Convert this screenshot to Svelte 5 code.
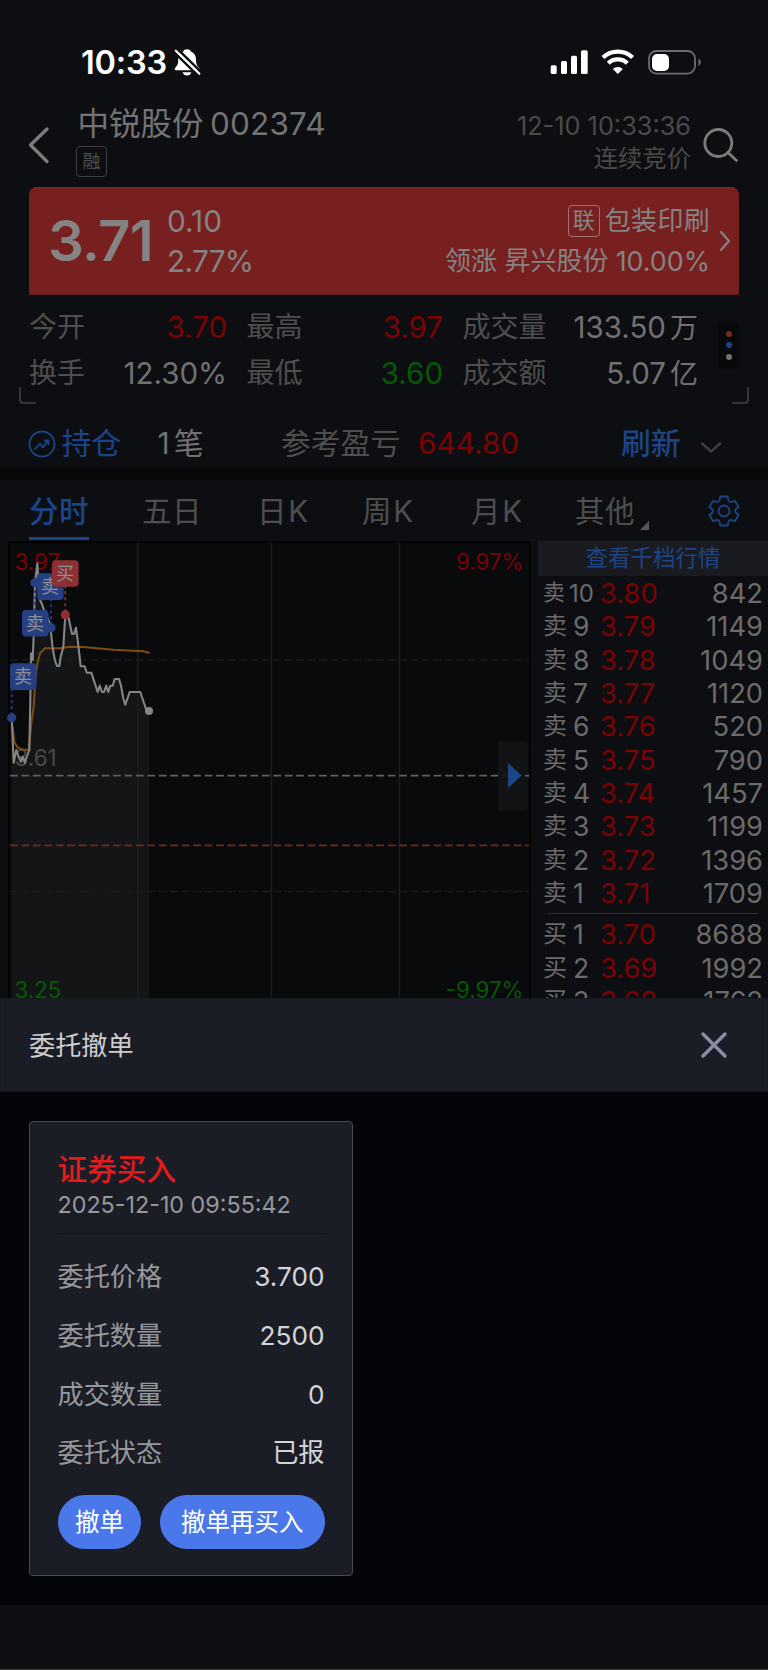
<script>
  const stats = [
    { label: '今开', value: '3.70', tone: 'up' },
    { label: '最高', value: '3.97', tone: 'up' },
    { label: '成交量', value: '133.50', unit: '万' },
    { label: '换手', value: '12.30%' },
    { label: '最低', value: '3.60', tone: 'down' },
    { label: '成交额', value: '5.07', unit: '亿' },
  ];

  const tabs = ['分时', '五日', '日K', '周K', '月K', '其他'];
  let activeTab = '分时';

  const asks = [
    ['10', '3.80', 842],
    ['9', '3.79', 1149],
    ['8', '3.78', 1049],
    ['7', '3.77', 1120],
    ['6', '3.76', 520],
    ['5', '3.75', 790],
    ['4', '3.74', 1457],
    ['3', '3.73', 1199],
    ['2', '3.72', 1396],
    ['1', '3.71', 1709],
  ];

  const bids = [
    ['1', '3.70', 8688],
    ['2', '3.69', 1992],
    ['3', '3.68', 1762],
  ];

  const priceLine =
    '11.7,176.7 13.7,221.7 16.3,209 18.7,216 21,220.7 22.7,215.7 24.7,221.7 29.3,209 30.3,160 31,112.3 32.7,119 33.7,94 35,42.3 37.3,22.3 40,59 41.7,62.3 44.3,70 50,82.3 52.7,107.3 55,119.7 57,125 59.3,125 60.7,115.7 63.3,105.7 65.3,74 68.7,77.3 72,93 74,93 76,86.7 78.3,104 80.7,125.3 84.7,125.3 86.7,131.7 91.3,131.7 97.7,151 99.7,144.7 102,151 104,151 106.3,144.7 108.3,151 110.3,144.7 112.7,144.7 114.7,138 119,138 121,144.7 123.3,157.3 125.3,163.7 129.7,151 140.3,151 146.7,170 149,170';
  const averageLine =
    '12.7,186 14.3,200.7 17.3,206.3 21.7,208.3 28.7,209.3 31.7,179 33.7,165.7 35.3,139 37.7,120.7 40,112.3 45,107.3 60,107.3 70,105.7 83.3,106 113.3,108.7 143.3,110.3 149,111.7';

  // x, y: top left of the badge; dotX, dotY: the deal itself
  const deals = [
    { side: 'sell', text: '卖', x: 10, y: 122.3, dotX: 11.7, dotY: 176.7 },
    { side: 'sell', text: '卖', x: 22, y: 69, dotX: 35, dotY: 41.7 },
    { side: 'sell', text: '卖', x: 37, y: 32.3, dotX: 51, dotY: 86.7 },
    { side: 'buy', text: '买', x: 52, y: 19.2, dotX: 65.3, dotY: 73.7 },
  ];

  const order = [
    ['委托价格', '3.700'],
    ['委托数量', '2500'],
    ['成交数量', '0'],
    ['委托状态', '已报'],
  ];
</script>

<div class="screen">
  <div class="market">
    <div class="statusbar">
      <span class="clock">10:33</span>
      <svg class="bell" width="27" height="29" viewBox="0 0 27 29">
        <path d="M13 1.2c1.9 0 3.3.9 3.8 2.3 3.4 1.2 5.2 4 5.2 7.8 0 5 .9 6.3 3 8.4.9.9.6 2.6-.9 2.6H2.2c-1.5 0-2-1.6-.9-2.6 2.2-2.2 2.9-3.6 2.9-8.4 0-3.8 1.8-6.6 5.1-7.8.5-1.4 1.9-2.3 3.7-2.3z" />
        <path d="M8.6 24.3h8.7c-.4 2-2.2 3.3-4.3 3.3s-3.9-1.3-4.4-3.3z" />
        <path class="gap" d="M-.5 3.5l26 25.5M3 .5l26 25.5" />
        <path class="slash" d="M1.8 2.7L25.4 25.8" />
      </svg>
      <svg class="signals" width="152" height="28" viewBox="0 0 152 28">
        <rect x="0.7" y="16.3" width="6" height="8.7" rx="1.6" />
        <rect x="11" y="12" width="6" height="13" rx="1.6" />
        <rect x="21" y="6.7" width="6" height="18.3" rx="1.6" />
        <rect x="31" y="1.3" width="6.7" height="23.7" rx="1.6" />
        <g class="wave">
          <path d="M53 8.5a21.5 21.5 0 0 1 29.6 0" />
          <path d="M58.3 14.2a13.6 13.6 0 0 1 19 0" />
        </g>
        <path d="M67.8 25l-5-5a7.3 7.3 0 0 1 10 0z" />
        <rect class="shell" x="99" y="2" width="46" height="22.6" rx="7.5" />
        <rect x="102" y="5" width="17" height="17" rx="5" />
        <path class="tip" d="M148.500 9.700c3 1.200 3 6 0 7.200z" />
      </svg>
    </div>

    <header>
      <svg class="back" width="22" height="38" viewBox="0 0 22 38">
        <path d="M19 3L2.5 19 19 35.5" />
      </svg>
      <div class="name">
        <h1>中锐股份 <span>002374</span></h1>
        <span class="margin-tag">融</span>
      </div>
      <div class="time">
        <span class="date">12-10 10:33:36</span>
        <span>连续竞价</span>
      </div>
      <svg class="search" width="36" height="36" viewBox="0 0 36 36">
        <circle cx="15.3" cy="15" r="13.5" />
        <path d="M25 24.5l8.5 8" />
      </svg>
    </header>

    <section class="quote">
      <strong>3.71</strong>
      <div class="change">
        <span>0.10</span>
        <span class="percent">2.77%</span>
      </div>
      <div class="sector">
        <div class="industry"><span class="link-tag">联</span>包装印刷</div>
        <div>领涨 昇兴股份 <span class="rate">10.00%</span></div>
      </div>
      <svg class="more" width="12" height="22" viewBox="0 0 12 22">
        <path d="M2 2l8 9-8 9" />
      </svg>
    </section>

    <section class="stats">
      <div class="stats-grid">
        {#each stats as stat}
          <span class="label">{stat.label}</span>
          <span class="value {stat.tone ?? ''}">{stat.value}{#if stat.unit}<i>{stat.unit}</i>{/if}</span>
        {/each}
      </div>
      <div class="dots"><b></b><b></b><b></b></div>
    </section>
    <div class="corners"><i></i><i></i></div>

    <section class="position">
      <svg width="28" height="28" viewBox="0 0 28 28">
        <circle cx="14" cy="14" r="12.5" />
        <path d="M7 19l5-5.5 3 4 5-7M17 10.5h3.5V14" />
      </svg>
      <span class="blue hold">持仓</span>
      <span class="count">1<i>笔</i></span>
      <span class="label">参考盈亏</span>
      <span class="up profit">644.80</span>
      <span class="blue refresh">刷新</span>
      <svg class="fold" width="22" height="12" viewBox="0 0 22 12">
        <path d="M2 1.5l9 8 9-8" />
      </svg>
    </section>

    <nav>
      {#each tabs as tab}
        <button
          class:active={tab === activeTab}
          class:kline={tab.endsWith('K')}
          on:click={() => (activeTab = tab)}
        >
          {tab}
          {#if tab === '其他'}<em></em>{/if}
        </button>
      {/each}
      <svg class="gear" width="32" height="32" viewBox="0 0 32 32">
        <path d="M12.3 1.5h7.4l.7 3.5c.4 1.6 1.9 2.4 3.4 1.9l3.2-1.1 3.5 6.2-2.5 2.2c-1.3 1-1.3 2.6 0 3.6l2.5 2.2-3.5 6.2-3.2-1.1c-1.5-.5-3 .3-3.4 1.9l-.7 3.5h-7.4l-.7-3.5c-.4-1.6-1.9-2.4-3.4-1.9L5 26.2 1.5 20 4 17.8c1.3-1 1.3-2.6 0-3.6L1.5 12 5 5.8l3.2 1.1c1.5.5 3-.3 3.4-1.9z" />
        <circle cx="16" cy="16" r="5.5" />
      </svg>
    </nav>

    <div class="board">
      <svg class="chart" width="538" height="457" viewBox="0 0 538 457">
        <rect class="frame" x="9" y="1" width="521" height="480" />
        <polygon class="area" points="11.7,470 {priceLine} 149,470" />
        <path class="column" d="M137.8 2v460M271.3 2v460M399.3 2v460" />
        <path class="dash faint" d="M10 119h519M10 350.5h519" />
        <path class="dash zero" d="M10 234.7h519" />
        <path class="dash cost" d="M10 304.3h519" />
        <rect class="handle" x="498" y="200.5" width="30" height="69" rx="3" />
        <path class="arrow" d="M508 222l13.5 12.5L508 247z" />
        <path class="dash zero" d="M525 234.7h4" />
        <g class="scale">
          <text class="red" x="14.5" y="29">3.97</text>
          <text class="red end" x="523.5" y="29">9.97%</text>
          <text x="14.5" y="225">3.61</text>
          <text class="green" x="14.5" y="456.7">3.25</text>
          <text class="green end" x="523.5" y="456.7">-9.97%</text>
        </g>
        <polyline class="average" points={averageLine} />
        <polyline class="price" points={priceLine} />
        <circle class="last" cx="149" cy="170" r="4" />
        {#each deals as deal}
          <g class={deal.side}>
            <path d="M{deal.dotX} {deal.y + 13}V{deal.dotY}" />
            <circle cx={deal.dotX} cy={deal.dotY} r="4.6" />
            <rect x={deal.x} y={deal.y} width="26.6" height="26.6" rx="4" />
            <text x={deal.x + 13} y={deal.y + 20}>{deal.text}</text>
          </g>
        {/each}
      </svg>

      <aside>
        <a href="#depth">查看千档行情</a>
        {#each asks as [level, price, volume]}
          <div class="level" class:wide={level === '10'}>
            <span class="side">卖</span><b>{level}</b><span class="up">{price}</span><span class="volume">{volume}</span>
          </div>
        {/each}
        <hr />
        {#each bids as [level, price, volume]}
          <div class="level">
            <span class="side">买</span><b>{level}</b><span class="up">{price}</span><span class="volume">{volume}</span>
          </div>
        {/each}
      </aside>
    </div>
  </div>

  <div class="sheet">
    <div class="sheet-head">
      <h2>委托撤单</h2>
      <svg width="28" height="28" viewBox="0 0 28 28">
        <path d="M3 3l22 22M25 3L3 25" />
      </svg>
    </div>
    <div class="sheet-body">
      <div class="card">
        <h3>证券买入</h3>
        <time>2025-12-10 09:55:42</time>
        <dl>
          {#each order as [label, value]}
            <div>
              <dt>{label}</dt>
              <dd>{value}</dd>
            </div>
          {/each}
        </dl>
        <div class="actions">
          <button>撤单</button>
          <button class="rebuy">撤单再买入</button>
        </div>
      </div>
    </div>
    <footer></footer>
  </div>
</div>

<style>
  :global(body) {
    background: #0d0e12;
  }

  .screen {
    width: 768px;
    height: 1670px;
    overflow: hidden;
    background: #0d0e12;
    color: #6b6b6b;
    font-family: Inter, 'Noto Sans CJK SC', sans-serif;
    font-size: 28px;
    line-height: 1;
  }

  .screen * {
    box-sizing: border-box;
  }

  svg {
    display: block;
    flex: none;
    fill: none;
    stroke-linecap: round;
    stroke-linejoin: round;
  }

  i,
  em {
    font-style: normal;
  }

  button {
    border: 0;
    padding: 0;
    background: none;
    color: inherit;
    font: inherit;
    white-space: nowrap;
  }

  .up {
    color: #7c0204;
  }

  .down {
    color: #045a04;
  }

  .blue {
    color: #1b4586;
  }

  .market {
    height: 998px;
    overflow: hidden;
  }

  .statusbar {
    display: flex;
    align-items: center;
    height: 105px;
    padding: 20px 66px 0 81px;
  }

  .clock {
    width: 93px;
    padding-top: 2px;
    color: #fff;
    font-size: 32.5px;
    font-weight: 600;
    letter-spacing: -0.2px;
    white-space: nowrap;
  }

  .bell {
    fill: #fff;
  }

  .bell .gap {
    stroke: #0d0e12;
    stroke-width: 2.5;
  }

  .bell .slash {
    stroke: #fff;
    stroke-width: 2.2;
  }

  .signals {
    margin-left: auto;
    fill: #fff;
  }

  .wave {
    fill: none;
    stroke: #fff;
    stroke-width: 4.2;
    stroke-linecap: butt;
  }

  .shell {
    fill: none;
    stroke: #6d6e70;
    stroke-width: 1.8;
  }

  .tip {
    fill: #6d6e70;
  }

  header {
    display: flex;
    height: 82px;
    padding: 0 29px 0 28px;
  }

  .back {
    margin-top: 21px;
    stroke: #7b7b7b;
    stroke-width: 3.4;
  }

  .name {
    padding-left: 26px;
  }

  h1 {
    margin: 0;
    padding-left: 1.5px;
    height: 41px;
    color: #737373;
    font-size: 31.5px;
    font-weight: 400;
    line-height: 38px;
    white-space: nowrap;
    word-spacing: -2.5px;
  }

  h1 span {
    letter-spacing: 0.2px;
  }

  .margin-tag {
    display: block;
    width: 31px;
    height: 31px;
    border: 1px solid #3e3e40;
    border-radius: 4px;
    color: #505050;
    font-size: 18px;
    line-height: 29px;
    text-align: center;
  }

  .time {
    display: flex;
    flex-direction: column;
    gap: 4px;
    margin: 7px 12px 0 auto;
    color: #4a4a4b;
    font-size: 24.3px;
    line-height: 28px;
    text-align: right;
  }

  .date {
    font-size: 25.3px;
  }

  .search {
    margin-top: 23px;
    stroke: #7b7b7b;
    stroke-width: 2.8;
  }

  .quote {
    display: flex;
    align-items: center;
    height: 108px;
    margin: 0 29px;
    padding: 0 8px 0 19px;
    border-top: 1px solid #862626;
    border-bottom: 1px solid #5c1b1c;
    border-radius: 8px 8px 0 0;
    background: #782020;
    color: #858383;
    white-space: nowrap;
  }

  .quote strong {
    width: 119px;
    font-size: 56.5px;
    font-weight: 600;
    letter-spacing: -0.8px;
  }

  .change {
    font-size: 29.8px;
    line-height: 40.5px;
  }

  .change span {
    display: block;
  }

  .percent {
    letter-spacing: -0.7px;
  }

  .sector {
    margin-left: auto;
    font-size: 26px;
    line-height: 40.5px;
  }

  .sector div {
    display: flex;
    justify-content: flex-end;
    align-items: center;
    white-space: pre;
  }

  .industry {
    letter-spacing: 0.3px;
  }

  .rate {
    font-size: 26.8px;
  }

  .link-tag {
    width: 32px;
    height: 32px;
    margin-right: 5px;
    border: 1px solid #a07070;
    border-radius: 4px;
    font-size: 22px;
    line-height: 28px;
    text-align: center;
  }

  .more {
    margin-left: 9px;
    stroke: #858383;
    stroke-width: 2.2;
  }

  .stats {
    display: flex;
    align-items: flex-start;
    justify-content: space-between;
    height: 92px;
    padding: 9px 29px 0 29px;
  }

  .stats-grid {
    display: grid;
    grid-template-columns: 62px 136px 82px 134px 113px 142px;
    grid-auto-rows: 46px;
    line-height: 46px;
    white-space: nowrap;
  }

  /* every label but the first of a row stands off the value before it */
  .stats-grid .value + .label {
    padding-left: 19.5px;
  }

  .stats-grid .value:nth-child(6) + .label {
    padding-left: 0;
  }

  .label {
    color: #4e4e4f;
  }

  .value {
    font-size: 29.5px;
    text-align: right;
  }

  .value i {
    padding-left: 4px;
    font-size: 28px;
  }

  .value:not(.up, .down) {
    color: #717171;
  }

  .dots {
    display: flex;
    flex-direction: column;
    align-items: center;
    justify-content: center;
    gap: 5.5px;
    width: 21px;
    height: 48px;
    margin-top: 17px;
    border-radius: 4px;
    background: #08090b;
  }

  .dots b {
    width: 6px;
    height: 6px;
    border-radius: 50%;
    background: #717171;
  }

  .dots b:nth-child(1) {
    background: #7b2a20;
  }

  .dots b:nth-child(2) {
    background: #1b4586;
  }

  .corners {
    display: flex;
    justify-content: space-between;
    padding: 0 19px;
  }

  .corners i {
    width: 17px;
    height: 17px;
    border-bottom: 2px solid #363638;
    border-left: 2px solid #363638;
    border-radius: 0 0 0 4px;
  }

  .corners i:last-child {
    transform: scaleX(-1);
  }

  .position {
    display: grid;
    grid-template-columns: 33.5px 96px 123.5px 137px 203px 79px 22px;
    align-items: center;
    height: 76px;
    padding: 4px 28px 0;
    background: linear-gradient(#0d0e12 82%, #08090b 86%);
    font-size: 29.8px;
    white-space: nowrap;
  }

  .position svg {
    stroke: #1b4586;
    stroke-width: 1.8;
  }

  .position .fold {
    margin-top: 7px;
    stroke: #3e3e40;
    stroke-width: 2.5;
  }

  .count {
    color: #717171;
  }

  .count i {
    padding-left: 4px;
  }

  .refresh {
    font-weight: 500;
  }

  nav {
    display: grid;
    grid-template-columns: 113px 115px 105px 109px 104px 133px 32px;
    height: 61px;
    padding-left: 29px;
    color: #4e4e4f;
    font-size: 29.5px;
    box-shadow: inset 0 1px #0f1014;
  }

  nav button {
    display: flex;
    align-items: flex-end;
    height: 60px;
    padding-bottom: 14px;
    justify-self: start;
    line-height: 30px;
    letter-spacing: 0.5px;
  }

  nav .kline {
    letter-spacing: 1.8px;
  }

  nav .active {
    border-bottom: 3px solid #1b4586;
    padding-bottom: 11px;
    color: #1b4586;
    font-weight: 500;
  }

  nav em {
    width: 9px;
    height: 9px;
    margin: 0 0 -4px 5px;
    background: #59595a;
    clip-path: polygon(100% 0, 100% 100%, 0 100%);
  }

  .gear {
    margin-top: 15px;
    stroke: #1b4586;
    stroke-width: 1.8;
  }

  .board {
    display: flex;
  }

  .frame {
    fill: #090a0c;
    stroke: #030304;
    stroke-width: 2;
  }

  .area {
    fill: #141516;
  }

  .column {
    stroke: #1b1c23;
    stroke-width: 1.7;
  }

  .dash {
    stroke-width: 1.7;
    stroke-dasharray: 7.7 3.75;
    stroke-linecap: butt;
  }

  .faint {
    stroke: #1a1b20;
  }

  .zero {
    stroke: #606061;
  }

  .cost {
    stroke: #74281f;
  }

  .handle {
    fill: #141517;
    fill-opacity: 0.85;
  }

  .arrow {
    fill: #1b4586;
  }

  .scale {
    fill: #4a4a4b;
    font-size: 22.3px;
  }

  .scale .red {
    fill: #7c0204;
  }

  .scale .green {
    fill: #045a04;
  }

  .scale .end {
    text-anchor: end;
  }

  .average {
    stroke: #7f4c10;
    stroke-width: 2;
  }

  .price {
    stroke: #858585;
    stroke-width: 2.1;
  }

  .last {
    fill: #858585;
  }

  .sell {
    fill: #253f82;
    stroke: #253f82;
  }

  .buy {
    fill: #8e3032;
    stroke: #8e3032;
  }

  .sell path,
  .buy path {
    stroke-width: 1.8;
    stroke-dasharray: 3 3;
    stroke-linecap: butt;
  }

  .sell circle,
  .sell rect,
  .buy circle,
  .buy rect {
    stroke: none;
  }

  .sell text,
  .buy text {
    stroke: none;
    fill: #8e8e92;
    font-size: 18px;
    text-anchor: middle;
  }

  aside {
    flex: 1;
    font-size: 27.3px;
    white-space: nowrap;
  }

  aside a {
    display: block;
    height: 35px;
    margin-bottom: 1px;
    background: #1a1b20;
    color: #1b4586;
    font-size: 22.5px;
    line-height: 34px;
    text-align: center;
    text-decoration: none;
  }

  .level {
    display: grid;
    grid-template-columns: 30px 27px 60px 1fr;
    height: 33.33px;
    padding: 0 5px 0 5px;
    line-height: 33.33px;
  }

  .level .side {
    font-size: 24px;
    line-height: 31px;
  }

  .level b {
    font-size: 26.5px;
    font-weight: 400;
  }

  .level.wide .side {
    font-size: 22px;
  }

  .level.wide b {
    margin-left: -4px;
    font-size: 24px;
  }

  .volume {
    text-align: right;
  }

  hr {
    width: 210px;
    height: 1px;
    margin: 3px auto 4px;
    border: 0;
    background: #303134;
  }

  .sheet-head {
    display: flex;
    align-items: center;
    justify-content: space-between;
    height: 94px;
    padding: 0 39px 0 28px;
    border: 1px solid #171920;
    background: #1b1d26;
  }

  .sheet-head svg {
    stroke: #8c8da3;
    stroke-width: 3.4;
  }

  h2 {
    margin: 0;
    padding-top: 3px;
    color: #cdcdcf;
    font-size: 26.2px;
    font-weight: 400;
  }

  .sheet-body {
    height: 513px;
    padding: 29px;
    background: #04050a;
  }

  .card {
    width: 324px;
    height: 455px;
    padding: 32px 27.5px 0;
    border: 1px solid #4a4b50;
    border-radius: 4px;
    background: #1b1d26;
  }

  h3 {
    margin: 0;
    color: #e41a1c;
    font-size: 29.7px;
    font-weight: 500;
    line-height: 30px;
  }

  time {
    display: block;
    height: 42px;
    margin-top: 8px;
    border-bottom: 1px solid #14151a;
    color: #97989b;
    font-size: 23.3px;
    line-height: 25px;
    white-space: nowrap;
  }

  dl {
    margin: 14px 0 12px;
  }

  dl div {
    display: flex;
    align-items: center;
    justify-content: space-between;
    height: 58.7px;
    font-size: 26.2px;
  }

  dt {
    color: #97989b;
  }

  dd {
    margin: 0;
    color: #d4d4d6;
  }

  .actions {
    display: flex;
    gap: 18.5px;
  }

  .actions button {
    width: 84px;
    height: 54px;
    border-radius: 27px;
    background: #4a78ea;
    color: #fff;
    font-size: 24.5px;
  }

  .actions .rebuy {
    width: 165px;
  }

  footer {
    height: 65px;
    border-bottom: 1px solid #3c3d3f;
    background: #0d0e12;
  }
</style>
